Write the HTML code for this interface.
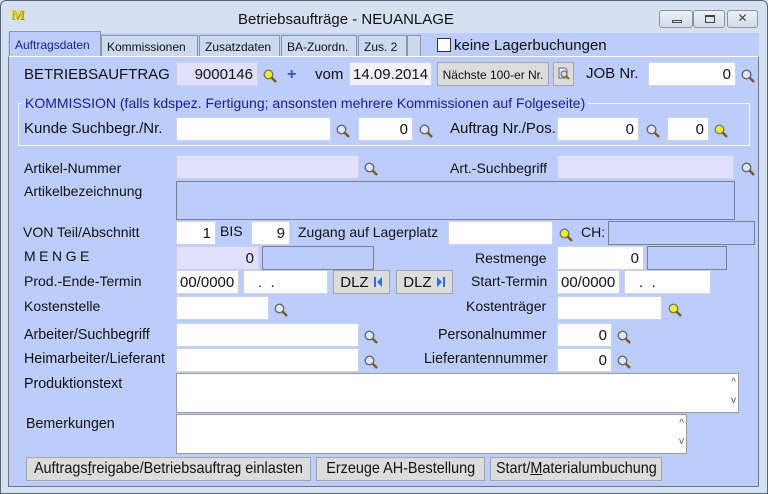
<!DOCTYPE html>
<html><head><meta charset="utf-8"><style>
*{box-sizing:border-box;margin:0;padding:0}
body{width:768px;height:494px;background:#dae4f1;font-family:"Liberation Sans",sans-serif;font-size:14px;color:#111;position:relative;overflow:hidden}
.a{position:absolute}
.win{left:0;top:0;width:768px;height:494px;border:1px solid #5a6470;border-radius:6px 6px 0 0;background:#d5e1f0}
.panel{left:8px;top:56px;width:751px;height:431px;background:#bccdfc;border:1px solid #6f7785;border-top-color:#fff}
.f{position:absolute;height:24px;background:#fff;border:1px solid #c9d2e8;text-align:right;padding:3px 4px 0 0;font-size:15px}
.l{background:#e0e0fc}
.g{position:absolute;border:1px solid #7a7f8c;background:#bccdfc}
.t{position:absolute;white-space:nowrap}
.c{font-size:15px;transform:scaleX(.95);transform-origin:left}
.bc{display:inline-block;font-size:16px;transform:scaleX(.9);flex:none}
.m{position:absolute;width:14px;height:14px}
.btn{position:absolute;height:24px;background:#dcdcdc;border:1px solid #a5a5a5;text-align:center;padding-top:3px;white-space:nowrap}
.bb{display:flex;justify-content:center;padding-top:2px}
.tab{position:absolute;top:35px;height:21px;border:1px solid #8d96a6;border-bottom:none;background:#ccd9ee;font-size:12px;padding:4px 0 0 5px;white-space:nowrap}
.wb{position:absolute;top:10px;height:18px;border:1px solid #8a93a1;border-radius:3px;background:linear-gradient(#eef2f7,#d3dbe6)}
.sc{position:absolute;right:2px;font-size:10px;color:#555}
</style></head><body>
<div class="a win"></div>
<div class="t" style="left:11px;top:8px;font-family:'Liberation Serif';font-weight:bold;color:#e8d000;font-size:14px;text-shadow:1px 1px 0 #8a7a00">M</div>
<div class="t" style="left:238px;top:11px;font-size:15px">Betriebsaufträge - NEUANLAGE</div>
<div class="wb" style="left:659px;width:34px"><div class="a" style="left:12px;top:9px;width:10px;height:3px;border:1px solid #444"></div></div>
<div class="wb" style="left:693px;width:32px"><div class="a" style="left:11px;top:4px;width:10px;height:8px;border:1px solid #444;border-top-width:2px"></div></div>
<div class="wb" style="left:727px;width:31px;text-align:center;font-size:12px;color:#444;line-height:15px">✕</div>
<div class="a" style="left:8px;top:33px;width:751px;height:23px;background:#bccdfc"></div>
<div class="tab" style="left:9px;top:31px;height:26px;width:92px;background:#bccdfc;color:#1a1a90;padding-top:6px">Auftragsdaten</div>
<div class="tab" style="left:101px;width:97px">Kommissionen</div>
<div class="tab" style="left:199px;width:81px">Zusatzdaten</div>
<div class="tab" style="left:281px;width:76px">BA-Zuordn.</div>
<div class="tab" style="left:358px;width:49px">Zus. 2</div>
<div class="tab" style="left:407px;width:14px"></div>
<div class="a" style="left:437px;top:38px;width:14px;height:14px;background:#fff;border:1px solid #333"></div>
<div class="t" style="left:454px;top:37px;font-size:15px">keine Lagerbuchungen</div>
<div class="a panel"></div>

<div class="t" style="left:24px;top:66px;font-size:15px">BETRIEBSAUFTRAG</div>
<div class="f l" style="left:176px;top:62px;width:82px">9000146</div>
<div class="t" style="left:287px;top:66px;color:#3050d0;font-size:16px;font-weight:bold">+</div>
<div class="t" style="left:315px;top:66px;font-size:15px">vom</div>
<div class="f" style="left:349px;top:62px;width:83px;background:#f2f2fc;text-align:left;padding-left:3px">14.09.2014</div>
<div class="btn" style="left:437px;top:62px;width:112px;font-size:12px;padding-top:5px">Nächste 100-er Nr.</div>
<div class="btn" style="left:553px;top:62px;width:21px"></div>
<div class="t" style="left:586px;top:65px;font-size:15px">JOB Nr.</div>
<div class="f" style="left:648px;top:62px;width:88px">0</div>

<div class="a" style="left:18px;top:103px;width:732px;height:43px;border:1px solid #f4f4f4;border-right-color:#fff"></div>
<div class="t" style="left:22px;top:95px;background:#bccdfc;color:#1a1a99;font-size:14px;padding:0 3px">KOMMISSION (falls kdspez. Fertigung; ansonsten mehrere Kommissionen auf Folgeseite)</div>
<div class="t" style="left:24px;top:120px;font-size:15px">Kunde Suchbegr./Nr.</div>
<div class="f" style="left:176px;top:117px;width:155px"></div>
<div class="f" style="left:358px;top:117px;width:55px">0</div>
<div class="t" style="left:450px;top:120px;font-size:15px">Auftrag Nr./Pos.</div>
<div class="f" style="left:557px;top:117px;width:82px">0</div>
<div class="f" style="left:667px;top:117px;width:42px">0</div>

<div class="t" style="left:24px;top:160px">Artikel-Nummer</div>
<div class="f l" style="left:176px;top:155px;width:183px"></div>
<div class="t" style="left:450px;top:160px">Art.-Suchbegriff</div>
<div class="f l" style="left:557px;top:155px;width:177px"></div>
<div class="t" style="left:24px;top:183px">Artikelbezeichnung</div>
<div class="g" style="left:176px;top:181px;width:559px;height:39px"></div>

<div class="t" style="left:23px;top:224px">VON Teil/Abschnitt</div>
<div class="f" style="left:176px;top:221px;width:40px">1</div>
<div class="t" style="left:220px;top:223px">BIS</div>
<div class="f" style="left:251px;top:221px;width:39px">9</div>
<div class="t" style="left:298px;top:224px">Zugang auf Lagerplatz</div>
<div class="f" style="left:448px;top:221px;width:105px"></div>
<div class="t" style="left:581px;top:224px">CH:</div>
<div class="g" style="left:608px;top:221px;width:147px;height:24px"></div>

<div class="t" style="left:24px;top:248px;letter-spacing:3.5px">MENGE</div>
<div class="f l" style="left:176px;top:246px;width:83px">0</div>
<div class="g" style="left:262px;top:246px;width:112px;height:24px"></div>
<div class="t" style="left:475px;top:250px">Restmenge</div>
<div class="f" style="left:557px;top:246px;width:87px">0</div>
<div class="g" style="left:647px;top:246px;width:80px;height:24px"></div>

<div class="t" style="left:24px;top:273px">Prod.-Ende-Termin</div>
<div class="f" style="left:176px;top:270px;width:63px;text-align:left;padding-left:3px">00/0000</div>
<div class="f" style="left:243px;top:270px;width:85px;text-align:left;padding-left:14px">.&nbsp;&nbsp;.</div>
<div class="btn" style="left:333px;top:270px;width:57px;font-size:15px">DLZ <svg width="10" height="12" viewBox="0 0 10 12" style="vertical-align:-1px"><rect x="1" y="1" width="2" height="10" fill="#2e6ee0"/><path d="M9 1v10L4 6z" fill="#2e6ee0"/></svg></div>
<div class="btn" style="left:396px;top:270px;width:57px;font-size:15px">DLZ <svg width="10" height="12" viewBox="0 0 10 12" style="vertical-align:-1px"><rect x="7" y="1" width="2" height="10" fill="#2e6ee0"/><path d="M1 1v10L6 6z" fill="#2e6ee0"/></svg></div>
<div class="t" style="left:471px;top:273px">Start-Termin</div>
<div class="f" style="left:557px;top:270px;width:63px;text-align:left;padding-left:3px">00/0000</div>
<div class="f" style="left:624px;top:270px;width:87px;text-align:left;padding-left:14px">.&nbsp;&nbsp;.</div>

<div class="t" style="left:24px;top:298px">Kostenstelle</div>
<div class="f" style="left:176px;top:296px;width:93px"></div>
<div class="t" style="left:466px;top:298px">Kostenträger</div>
<div class="f" style="left:557px;top:296px;width:105px"></div>

<div class="t c" style="left:24px;top:326px">Arbeiter/Suchbegriff</div>
<div class="f" style="left:176px;top:323px;width:183px"></div>
<div class="t c" style="left:438px;top:326px">Personalnummer</div>
<div class="f" style="left:557px;top:323px;width:55px">0</div>
<div class="t c" style="left:24px;top:350px">Heimarbeiter/Lieferant</div>
<div class="f" style="left:176px;top:348px;width:183px"></div>
<div class="t c" style="left:424px;top:350px">Lieferantennummer</div>
<div class="f" style="left:557px;top:348px;width:55px">0</div>
<div class="t c" style="left:24px;top:375px">Produktionstext</div>
<div class="f" style="left:176px;top:373px;width:563px;height:40px;border-color:#999"><span class="sc" style="top:3px">^</span><span class="sc" style="top:21px">v</span></div>
<div class="t c" style="left:26px;top:415px">Bemerkungen</div>
<div class="f" style="left:176px;top:414px;width:511px;height:40px;border-color:#999"><span class="sc" style="top:3px">^</span><span class="sc" style="top:21px">v</span></div>

<div class="btn bb" style="left:26px;top:457px;width:285px"><span class="bc">Auftrags<u>f</u>reigabe/Betriebsauftrag einlasten</span></div>
<div class="btn bb" style="left:316px;top:457px;width:169px"><span class="bc">Erzeuge AH-Bestellung</span></div>
<div class="btn bb" style="left:490px;top:457px;width:172px"><span class="bc">Start/<u>M</u>aterialumbuchung</span></div>

<svg width="0" height="0" style="position:absolute"><defs><g id="mg"><circle cx="5.5" cy="5.5" r="4.3" fill="#dfe8f4" stroke="#667" stroke-width="1.4"/><path d="M8.5 8.5l4.5 4.5" stroke="#7a5a20" stroke-width="2.4"/></g><g id="my"><circle cx="5.5" cy="5.5" r="4.3" fill="#f2f020" stroke="#777" stroke-width="1.4"/><path d="M8.5 8.5l4.5 4.5" stroke="#7a5a20" stroke-width="2.4"/></g></defs></svg>
<svg class="m" style="left:263px;top:69px" viewBox="0 0 14 14"><use href="#my"/></svg>
<svg class="m" style="left:741px;top:69px" viewBox="0 0 14 14"><use href="#mg"/></svg>
<svg class="m" style="left:336px;top:124px" viewBox="0 0 14 14"><use href="#mg"/></svg>
<svg class="m" style="left:419px;top:124px" viewBox="0 0 14 14"><use href="#mg"/></svg>
<svg class="m" style="left:646px;top:124px" viewBox="0 0 14 14"><use href="#mg"/></svg>
<svg class="m" style="left:714px;top:124px" viewBox="0 0 14 14"><use href="#my"/></svg>
<svg class="m" style="left:364px;top:162px" viewBox="0 0 14 14"><use href="#mg"/></svg>
<svg class="m" style="left:741px;top:162px" viewBox="0 0 14 14"><use href="#mg"/></svg>
<svg class="m" style="left:559px;top:228px" viewBox="0 0 14 14"><use href="#my"/></svg>
<svg class="m" style="left:274px;top:303px" viewBox="0 0 14 14"><use href="#mg"/></svg>
<svg class="m" style="left:668px;top:303px" viewBox="0 0 14 14"><use href="#my"/></svg>
<svg class="m" style="left:364px;top:330px" viewBox="0 0 14 14"><use href="#mg"/></svg>
<svg class="m" style="left:617px;top:330px" viewBox="0 0 14 14"><use href="#mg"/></svg>
<svg class="m" style="left:364px;top:355px" viewBox="0 0 14 14"><use href="#mg"/></svg>
<svg class="m" style="left:617px;top:355px" viewBox="0 0 14 14"><use href="#mg"/></svg>
<svg class="m" style="left:556px;top:66px" viewBox="0 0 14 14"><path d="M3 12V2h6l2 2v8z" fill="#eee" stroke="#667"/><circle cx="8" cy="8" r="3" fill="#cde" stroke="#556"/><path d="M10 10l3 3" stroke="#a60" stroke-width="2"/></svg>
</body></html>
